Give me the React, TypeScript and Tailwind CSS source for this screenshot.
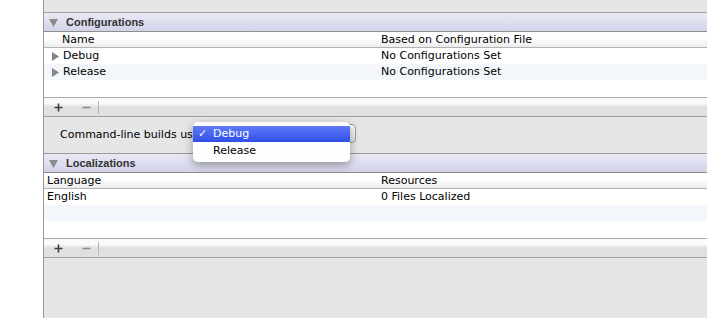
import React from 'react';

const font = { fontFamily: '"DejaVu Sans", "Liberation Sans", sans-serif' };

const Triangle: React.FC<{ dir: 'down' | 'right' }> = ({ dir }) =>
  dir === 'down' ? (
    <svg width="9" height="8" viewBox="0 0 9 8" className="shrink-0">
      <path d="M0 0 H9 L4.5 8 Z" fill="#8a8a8a" />
    </svg>
  ) : (
    <svg width="7" height="9" viewBox="0 0 7 9" className="shrink-0">
      <path d="M0 0 L7 4.5 L0 9 Z" fill="#858585" />
    </svg>
  );

const SectionHeader: React.FC<{ title: string }> = ({ title }) => (
  <div className="h-[19px] flex items-center gap-[8px] pl-[5px] pt-[1px] border-b border-[#8f8f8f] bg-gradient-to-b from-[#e9e9f6] to-[#d2d3e7] text-[11px] font-bold text-[#333]">
    <Triangle dir="down" />
    <span className="font-['Liberation_Sans',sans-serif]">{title}</span>
  </div>
);

const ColumnHeader: React.FC<{ left: string; right: string; indent?: boolean }> = ({ left, right, indent }) => (
  <div className="h-[16px] flex items-center pt-[1px] border-b border-[#b3b3b3] bg-gradient-to-b from-white from-40% to-[#ececec] text-[11px] text-black">
    <div className={indent ? 'w-[337px] pl-[18px]' : 'w-[337px] pl-[3px]'}>{left}</div>
    <div>{right}</div>
  </div>
);

const Row: React.FC<{ left: string; right: string; alt?: boolean; arrow?: boolean }> = ({ left, right, alt, arrow }) => (
  <div className={`h-[16px] flex items-center pt-[1px] text-[11px] text-black ${alt ? 'bg-[#f3f6fa]' : 'bg-white'}`}>
    <div className={`w-[337px] flex items-center ${arrow ? 'pl-[8px] gap-[4px]' : 'pl-[3px]'}`}>
      {arrow && <Triangle dir="right" />}
      <span>{left}</span>
    </div>
    <div>{right}</div>
  </div>
);

const Toolbar: React.FC = () => (
  <div className="h-[19px] flex items-center border-b border-[#a0a0a0] bg-gradient-to-b from-[#fafafa] from-30% to-[#e0e0e0] to-50% text-[#333]">
    <svg width="9" height="9" viewBox="0 0 9 9" className="ml-[10px]">
      <path d="M4.5 0.5 V8.5 M0.5 4.5 H8.5" stroke="#3c3c3c" strokeWidth="1.6" />
    </svg>
    <svg width="9" height="9" viewBox="0 0 9 9" className="ml-[19px]">
      <path d="M0.5 4.5 H8.5" stroke="#8a8a8a" strokeWidth="1.6" />
    </svg>
    <div className="ml-[7px] w-px h-[13px] bg-[#b5b5b5]" />
  </div>
);

export default function App() {
  return (
    <div className="w-[707px] h-[318px] bg-white flex overflow-hidden" style={font}>
      <div className="w-[43px] shrink-0 bg-white" />
      <div className="flex-1 border-l border-[#9a9a9a] bg-[#e6e6e6] flex flex-col relative">
        <div className="h-[13px] border-b border-[#a3a3a3]" />
        <SectionHeader title="Configurations" />
        <ColumnHeader left="Name" right="Based on Configuration File" indent />
        <Row left="Debug" right="No Configurations Set" arrow />
        <Row left="Release" right="No Configurations Set" arrow alt />
        <div className="h-[18px] bg-white border-b border-[#a8a8a8]" />
        <Toolbar />
        <div className="h-[37px] flex items-center pl-[16px] pt-[1px] border-b border-[#9a9a9a] text-[11px] text-black">
          <span>Command-line builds us</span>
        </div>
        <SectionHeader title="Localizations" />
        <ColumnHeader left="Language" right="Resources" />
        <Row left="English" right="0 Files Localized" />
        <Row left="" right="" alt />
        <div className="h-[18px] bg-white border-b border-[#a8a8a8]" />
        <Toolbar />
        <div className="flex-1" />

        {/* popup button behind the open menu */}
        <div className="absolute left-[149px] top-[124px] w-[163px] h-[19px] rounded-[4px] border border-[#9d9d9d] bg-gradient-to-b from-white to-[#e2e2e2]" />

        {/* open menu */}
        <div className="absolute left-[149px] top-[122px] w-[157px] h-[40px] rounded-[5px] bg-white/95 shadow-[0_3px_10px_rgba(0,0,0,0.35)] pt-[4px] text-[11px]">
          <div className="h-[16px] flex items-center pt-[1px] bg-gradient-to-b from-[#6079f6] to-[#2f4ee9] text-white">
            <span className="w-[20px] pl-[5px] font-bold">✓</span>
            <span>Debug</span>
          </div>
          <div className="h-[16px] flex items-center pt-[2px] text-black">
            <span className="w-[20px]" />
            <span>Release</span>
          </div>
        </div>
      </div>
    </div>
  );
}
